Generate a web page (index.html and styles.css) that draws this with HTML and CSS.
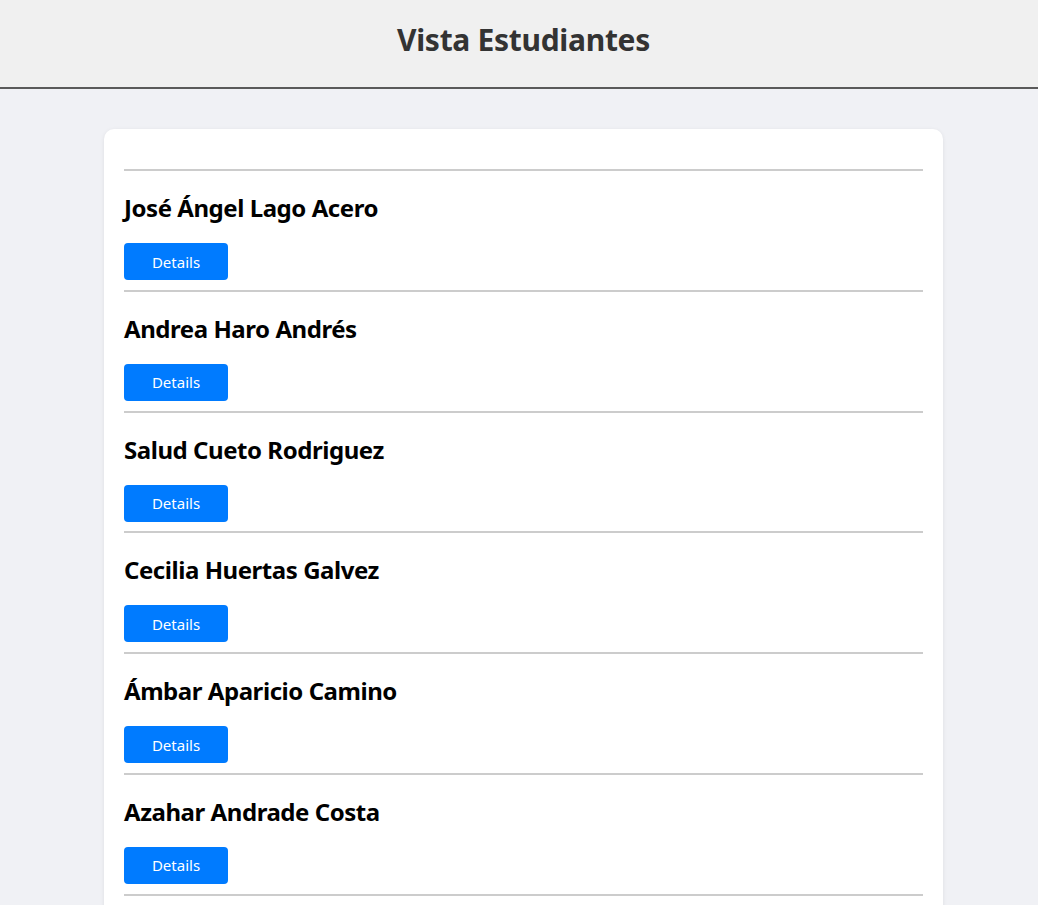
FILE: index.html
```
<!DOCTYPE html>
<html lang="es">
<head>
<meta charset="utf-8">
<title>Vista Estudiantes</title>
<link rel="stylesheet" href="styles.css">
</head>
<body>
<header class="top">
  <h1 class="title">Vista Estudiantes</h1>
</header>
<main class="page">
  <section class="card">
    <ul class="list">
      <li class="row"><h2 class="name">José Ángel Lago Acero</h2><button class="btn">Details</button></li>
      <li class="row"><h2 class="name">Andrea Haro Andrés</h2><button class="btn">Details</button></li>
      <li class="row"><h2 class="name">Salud Cueto Rodriguez</h2><button class="btn">Details</button></li>
      <li class="row"><h2 class="name">Cecilia Huertas Galvez</h2><button class="btn">Details</button></li>
      <li class="row"><h2 class="name">Ámbar Aparicio Camino</h2><button class="btn">Details</button></li>
      <li class="row"><h2 class="name">Azahar Andrade Costa</h2><button class="btn">Details</button></li>
    </ul>
  </section>
</main>
</body>
</html>
```
FILE: styles.css
```
html, body {
  margin: 0;
  padding: 0;
}
body {
  background: #f0f1f5;
  font-family: "Noto Sans", "Open Sans", sans-serif;
}
.top {
  background: #f0f0f0;
  height: 87px;
  border-bottom: 2px solid #5a5a5a;
  display: flex;
  align-items: center;
  justify-content: center;
  padding-left: 9px;
}
.title {
  margin: 0;
  font-size: 30px;
  font-weight: 700;
  color: #333;
  letter-spacing: -0.3px;
  transform: translateY(-4px);
}
.page {
  padding-top: 40px;
  padding-left: 9px;
  display: flex;
  justify-content: center;
}
.card {
  width: 799px;
  background: #fff;
  border-radius: 10px;
  box-shadow: 0 1px 4px rgba(0, 0, 0, 0.08);
  padding: 40px 20px 20px;
}
.list {
  list-style: none;
  margin: 0;
  padding: 0;
  border-top: 2px solid #cccccc;
}
.row {
  border-bottom: 2px solid #cccccc;
  padding: 21px 0 9.8px;
}
.name {
  margin: 0 0 19px;
  font-size: 24px;
  line-height: 32px;
  font-weight: 700;
  color: #000;
  letter-spacing: -0.45px;
}
.btn {
  display: block;
  width: 104px;
  height: 37px;
  border: none;
  border-radius: 4px;
  background: #007bff;
  color: #fff;
  font-family: inherit;
  font-size: 15px;
  padding: 0;
}
```
